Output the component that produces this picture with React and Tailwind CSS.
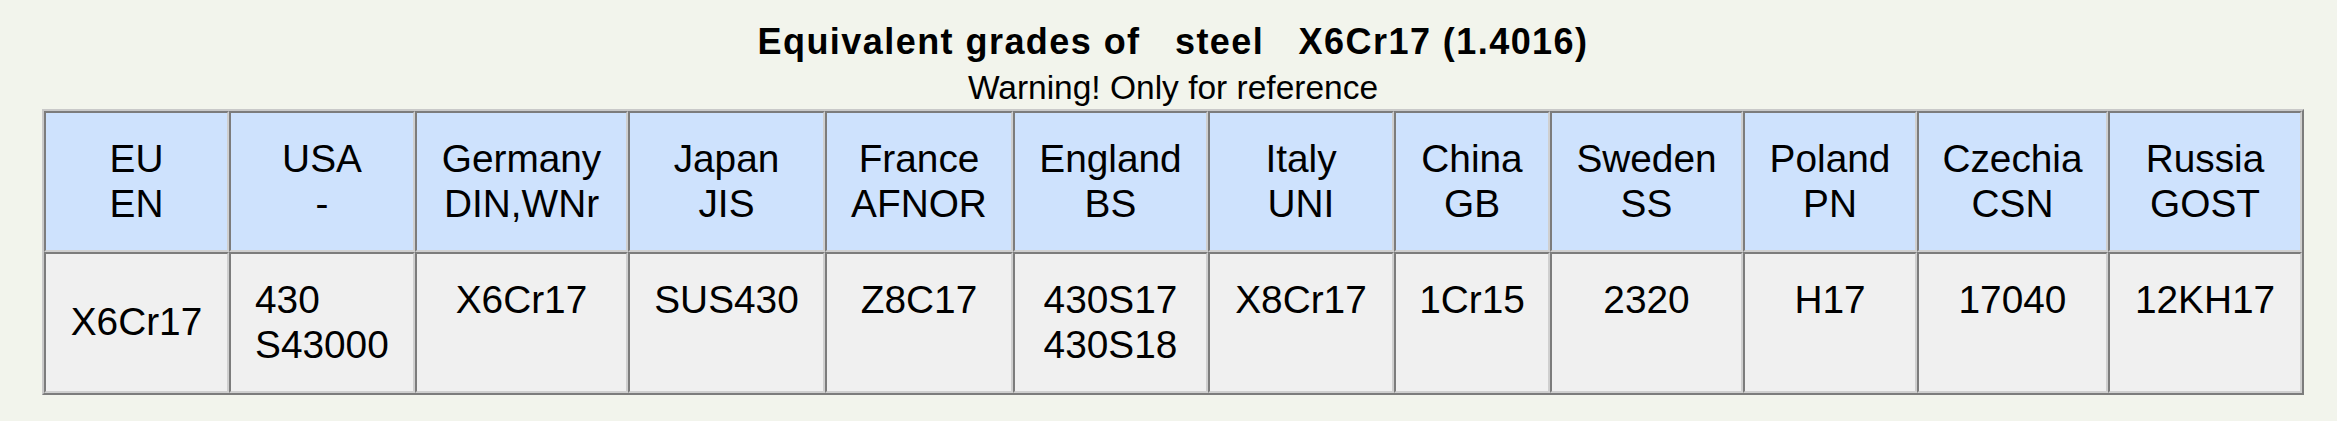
const headers = [
  ['EU', 'EN'],
  ['USA', '-'],
  ['Germany', 'DIN,WNr'],
  ['Japan', 'JIS'],
  ['France', 'AFNOR'],
  ['England', 'BS'],
  ['Italy', 'UNI'],
  ['China', 'GB'],
  ['Sweden', 'SS'],
  ['Poland', 'PN'],
  ['Czechia', 'CSN'],
  ['Russia', 'GOST'],
];

const grades = [
  ['X6Cr17'],
  ['430', 'S43000'],
  ['X6Cr17'],
  ['SUS430'],
  ['Z8C17'],
  ['430S17', '430S18'],
  ['X8Cr17'],
  ['1Cr15'],
  ['2320'],
  ['H17'],
  ['17040'],
  ['12KH17'],
];

const cell =
  'border-2 border-t-[#7c7c7c] border-l-[#7c7c7c] border-r-[#cfcfcf] border-b-[#cfcfcf] py-[24px] flex flex-col';

export default function App() {
  return (
    <div className="min-h-screen bg-[#f2f4ec] font-['Liberation_Sans',Arial,sans-serif] text-black">
      <div className="ml-[42px] w-[2262px] pt-[21px]">
        {/* Heading */}
        <h1 className="text-center text-[36px] leading-[41px] font-bold tracking-[1.45px] whitespace-pre">
          {'Equivalent grades of   steel   X6Cr17 (1.4016)'}
        </h1>
        <p className="mt-[7px] text-center text-[33.5px] leading-[38px]">Warning! Only for reference</p>

        {/* Grades table */}
        <div className="mt-[2px] border-2 border-t-[#c9c9c9] border-l-[#c9c9c9] border-r-[#7c7c7c] border-b-[#7c7c7c]">
          <div className="grid grid-cols-[185px_186px_213px_197px_188px_195px_186px_156px_193px_174px_191px_194px] text-[38.8px] leading-[44.6px]">
            {headers.map(([a, b]) => (
              <div key={a} className={`${cell} bg-[#cee2fd] items-center justify-center text-center`}>
                <span>{a}</span>
                <span>{b}</span>
              </div>
            ))}
            {grades.map((lines, i) => (
              <div
                key={i}
                className={`${cell} bg-[#f0f0f0] ${
                  i === 0
                    ? 'items-center justify-center text-center'
                    : i === 1
                    ? 'items-start justify-start pl-[24px] text-left'
                    : 'items-center justify-start text-center'
                }`}
              >
                {lines.map((l) => (
                  <span key={l}>{l}</span>
                ))}
                {lines.length === 1 && i !== 0 && <span>&nbsp;</span>}
                {i === 0 && <span className="invisible h-0">&nbsp;</span>}
              </div>
            ))}
          </div>
        </div>
      </div>
    </div>
  );
}
